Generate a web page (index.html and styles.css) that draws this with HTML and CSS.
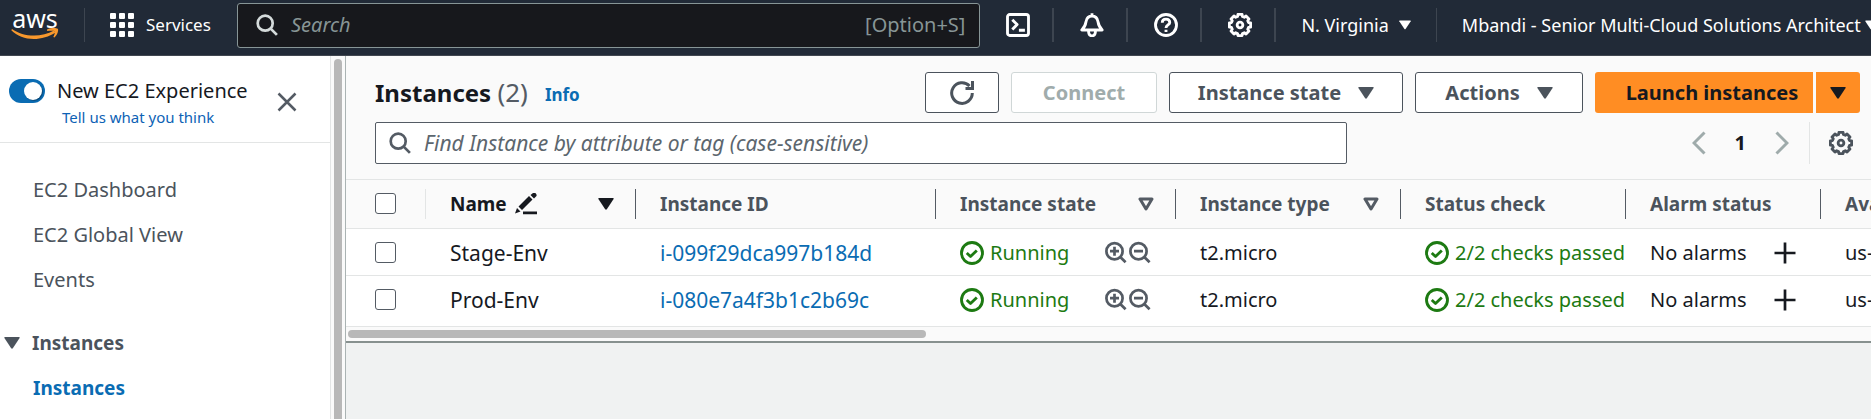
FILE: index.html
```html
<!DOCTYPE html>
<html lang="en">
<head>
<meta charset="utf-8">
<title>Instances | EC2</title>
<link rel="stylesheet" href="styles.css">
</head>
<body>
<svg class="sprite" aria-hidden="true">
  <symbol id="gear" viewBox="0 0 16 16"><path d="M6.63.93h2.74l.26 1.4 1.23.51 1.17-.81 1.94 1.94-.81 1.17.51 1.23 1.4.26v2.74l-1.4.26-.51 1.23.81 1.17-1.94 1.94-1.17-.81-1.23.51-.26 1.4H6.63l-.26-1.4-1.23-.51-1.17.81-1.94-1.94.81-1.17-.51-1.23-1.4-.26V6.63l1.4-.26.51-1.23-.81-1.17 1.94-1.94 1.17.81 1.23-.51z"/><circle cx="8" cy="8" r="1.9"/></symbol>
  <symbol id="search" viewBox="0 0 16 16"><circle cx="6.8" cy="6.8" r="5"/><path d="M10.6 10.6l4 4"/></symbol>
  <symbol id="zoom-in" viewBox="0 0 16 16"><circle cx="7" cy="6.8" r="5.4"/><path d="M11 10.800l3.400 3.400M4 6.800h6M7 3.800v6"/></symbol>
  <symbol id="zoom-out" viewBox="0 0 16 16"><circle cx="7" cy="6.8" r="5.4"/><path d="M11 10.800l3.400 3.400M4 6.800h6"/></symbol>
  <symbol id="ok" viewBox="0 0 16 16"><circle cx="8" cy="8" r="7"/><path d="M4.500 8l2.500 2.300 4.200-4"/></symbol>
  <symbol id="plus" viewBox="0 0 16 16"><path d="M8 1v14M1 8h14"/></symbol>
  <symbol id="caret" viewBox="0 0 16 12"><path d="M1 0h14q1 0 .6 1L9 11q-1 1.400-2 0L.4 1Q0 0 1 0z"/></symbol>
  <symbol id="caret-open" viewBox="0 0 16 14"><path d="M2 2h12L8 12z"/></symbol>
</svg>

<header class="topnav">
  <a class="logo" href="#" aria-label="AWS home">
    <span class="logo-word">aws</span>
    <svg class="logo-smile" viewBox="0 0 48 12"><path d="M1 1c11 8 29 9 42 1.500l1.500 2C31 13.500 11 13.500.3 2.300z"/><path d="M36 1.500C40-.3 45-.3 46.800.8c1 1.700-.5 6-3.300 8.700l-1.200-.5c1.200-2.500 2-5 1.300-5.800-.8-.8-5-.5-7.500-.2z"/></svg>
  </a>
  <button class="services" type="button">
    <svg class="icon solid" viewBox="0 0 24 24"><path d="M1 0h4q1 0 1 1v4q0 1-1 1H1q-1 0-1-1V1q0-1 1-1zm9 0h4q1 0 1 1v4q0 1-1 1h-4q-1 0-1-1V1q0-1 1-1zm9 0h4q1 0 1 1v4q0 1-1 1h-4q-1 0-1-1V1q0-1 1-1zM1 9h4q1 0 1 1v4q0 1-1 1H1q-1 0-1-1v-4q0-1 1-1zm9 0h4q1 0 1 1v4q0 1-1 1h-4q-1 0-1-1v-4q0-1 1-1zm9 0h4q1 0 1 1v4q0 1-1 1h-4q-1 0-1-1v-4q0-1 1-1zM1 18h4q1 0 1 1v4q0 1-1 1H1q-1 0-1-1v-4q0-1 1-1zm9 0h4q1 0 1 1v4q0 1-1 1h-4q-1 0-1-1v-4q0-1 1-1zm9 0h4q1 0 1 1v4q0 1-1 1h-4q-1 0-1-1v-4q0-1 1-1z"/></svg>
    Services
  </button>
  <label class="global-search">
    <svg class="icon"><use href="#search"/></svg>
    <input type="search" placeholder="Search" aria-label="Search">
    <span class="shortcut">[Option+S]</span>
  </label>
  <button class="nav-icon" type="button" aria-label="CloudShell"><svg class="icon bold" viewBox="0 0 16 16"><rect x="1" y="1" width="14" height="14" rx="1.500"/><path d="M4.200 4.500l3.200 3.200-3.200 3.300M8.600 11.500h4"/></svg></button>
  <button class="nav-icon" type="button" aria-label="Notifications"><svg class="icon bold" viewBox="0 0 16 16"><path d="M1.200 11.300h13.600C13 9.500 12.300 8 12 5.800 11.600 3.500 10.300 2 8 2S4.400 3.500 4 5.800C3.700 8 3 9.500 1.200 11.300zM8 2V.2M5.700 12c0 2 1 3.200 2.300 3.200s2.300-1.200 2.300-3.200"/></svg></button>
  <button class="nav-icon" type="button" aria-label="Help"><svg class="icon bold" viewBox="0 0 16 16"><circle cx="8" cy="8" r="7"/><path d="M5.500 6.500C5.500 5 6.500 4.100 8 4.100s2.500.9 2.500 2.200C10.500 8 8 8 8 10M8 11.200v1.500"/></svg></button>
  <button class="nav-icon" type="button" aria-label="Settings"><svg class="icon bold"><use href="#gear"/></svg></button>
  <button class="nav-menu" type="button">N. Virginia <svg class="caret-small"><use href="#caret"/></svg></button>
  <button class="nav-menu last" type="button">Mbandi - Senior Multi-Cloud Solutions Architect <svg class="caret-small"><use href="#caret"/></svg></button>
</header>

<div class="body">
  <aside class="sidebar">
    <div class="experience">
      <input class="toggle" type="checkbox" id="new-exp" checked>
      <div class="exp-text">
        <label for="new-exp">New EC2 Experience</label>
        <a href="#">Tell us what you think</a>
      </div>
      <button class="close" type="button" aria-label="Close navigation"><svg class="icon" viewBox="0 0 24 24"><path d="M3.500 3.500l17 17M20.500 3.500l-17 17"/></svg></button>
    </div>
    <nav class="side-links">
      <a href="#">EC2 Dashboard</a>
      <a href="#">EC2 Global View</a>
      <a href="#">Events</a>
      <button class="section" type="button"><svg class="caret"><use href="#caret"/></svg>Instances</button>
      <a class="current" href="#">Instances</a>
    </nav>
  </aside>
  <div class="side-scroll"><div class="side-thumb"></div></div>

  <main class="main">
    <section class="panel">
      <div class="toolbar">
        <div class="title-row">
          <h1>Instances <span class="count">(2)</span></h1>
          <a class="info" href="#">Info</a>
          <div class="actions">
            <button class="btn refresh" type="button" aria-label="Refresh"><svg class="icon heavy" viewBox="0 0 24 24"><path d="M22.300 12A10.300 10.300 0 1 1 19.500 5M22.500 0v7.500H15.500"/></svg></button>
            <button class="btn connect" type="button" disabled>Connect</button>
            <button class="btn state" type="button">Instance state <svg class="caret"><use href="#caret"/></svg></button>
            <button class="btn act" type="button">Actions <svg class="caret"><use href="#caret"/></svg></button>
            <div class="split">
              <button class="btn launch" type="button">Launch instances</button>
              <button class="btn launch-more" type="button" aria-label="More launch options"><svg class="caret"><use href="#caret"/></svg></button>
            </div>
          </div>
        </div>
        <div class="filter-row">
          <label class="filter">
            <svg class="icon"><use href="#search"/></svg>
            <input type="search" placeholder="Find Instance by attribute or tag (case-sensitive)" aria-label="Find instances">
          </label>
          <div class="pager">
            <button type="button" aria-label="Previous page"><svg class="chevron" viewBox="0 0 14 24"><path d="M12.500 1.500L2 12l10.500 10.500"/></svg></button>
            <button class="page" type="button">1</button>
            <button type="button" aria-label="Next page"><svg class="chevron" viewBox="0 0 14 24"><path d="M1.500 1.500L12 12 1.500 22.500"/></svg></button>
          </div>
          <button class="prefs" type="button" aria-label="Preferences"><svg class="icon bold"><use href="#gear"/></svg></button>
        </div>
      </div>

      <div class="table-wrap">
        <table>
          <colgroup><col class="c-check"><col class="c-name"><col class="c-id"><col class="c-state"><col class="c-type"><col class="c-status"><col class="c-alarm"><col class="c-zone"></colgroup>
          <thead>
            <tr>
              <th class="check"><div class="head light"><input type="checkbox" aria-label="Select all"></div></th>
              <th class="sorted"><div class="head"><span>Name</span><svg class="pencil" viewBox="0 0 22 22"><path d="M0 20.500l2-5.500 3.500 3.500zM3.500 13.500L14 3l3.500 3.500L7 17zM15.500 2L18 0q2-1 3.200 1 1 1.500-.2 2.500L19 5.500zM8 18.500h14v2.700H8z"/></svg><svg class="caret push"><use href="#caret"/></svg></div></th>
              <th><div class="head">Instance ID</div></th>
              <th><div class="head">Instance state<svg class="caret-open push"><use href="#caret-open"/></svg></div></th>
              <th><div class="head">Instance type<svg class="caret-open push"><use href="#caret-open"/></svg></div></th>
              <th><div class="head">Status check</div></th>
              <th><div class="head">Alarm status</div></th>
              <th><div class="head">Availability Zone</div></th>
            </tr>
          </thead>
          <tbody>
            <tr>
              <td class="check"><input type="checkbox" aria-label="Select Stage-Env"></td>
              <td class="wide">Stage-Env</td>
              <td class="wide"><a href="#">i-099f29dca997b184d</a></td>
              <td><div class="cell ok"><svg class="icon bold"><use href="#ok"/></svg>Running<span class="zooms"><svg class="icon"><use href="#zoom-in"/></svg><svg class="icon"><use href="#zoom-out"/></svg></span></div></td>
              <td>t2.micro</td>
              <td class="clip"><div class="cell ok"><svg class="icon bold"><use href="#ok"/></svg>2/2 checks passed</div></td>
              <td><div class="cell">No alarms<button class="add" type="button" aria-label="Add alarm"><svg class="icon"><use href="#plus"/></svg></button></div></td>
              <td>us-east-1a</td>
            </tr>
            <tr>
              <td class="check"><input type="checkbox" aria-label="Select Prod-Env"></td>
              <td class="wide">Prod-Env</td>
              <td class="wide"><a href="#">i-080e7a4f3b1c2b69c</a></td>
              <td><div class="cell ok"><svg class="icon bold"><use href="#ok"/></svg>Running<span class="zooms"><svg class="icon"><use href="#zoom-in"/></svg><svg class="icon"><use href="#zoom-out"/></svg></span></div></td>
              <td>t2.micro</td>
              <td class="clip"><div class="cell ok"><svg class="icon bold"><use href="#ok"/></svg>2/2 checks passed</div></td>
              <td><div class="cell">No alarms<button class="add" type="button" aria-label="Add alarm"><svg class="icon"><use href="#plus"/></svg></button></div></td>
              <td>us-east-1a</td>
            </tr>
          </tbody>
        </table>
      </div>
      <div class="table-scroll"><div class="table-thumb"></div></div>
    </section>
  </main>
</div>
</body>
</html>
```
FILE: styles.css
```css
* { box-sizing: border-box; }
body {
  margin: 0;
  height: 100vh;
  display: flex;
  flex-direction: column;
  overflow: hidden;
  font: 20px/30px "Noto Sans", "Open Sans", sans-serif;
  color: #16191f;
  background: #f0f2f2;
}
a { color: #0a6cb3; text-decoration: none; }
button, input { font: inherit; color: inherit; margin: 0; }
button { display: flex; align-items: center; background: none; border: 0; padding: 0; white-space: nowrap; cursor: pointer; }
input[type="search"] { appearance: none; border: 0; padding: 0; background: none; outline: 0; flex: 1; min-width: 0; }
input::placeholder { font-style: italic; opacity: 1; }

.sprite { position: absolute; width: 0; height: 0; }
.icon { width: 24px; height: 24px; flex: none; fill: none; stroke: currentColor; stroke-width: 1.8; }
.icon.bold { stroke-width: 1.9; stroke-linejoin: round; }
.icon.heavy { stroke-width: 3; }
.icon.solid { fill: currentColor; stroke: none; }
.caret { width: 16px; height: 12px; flex: none; fill: currentColor; }
.caret-small { width: 12px; height: 10px; flex: none; fill: currentColor; }
.caret-open { width: 16px; height: 14px; flex: none; fill: none; stroke: #545b64; stroke-width: 3; stroke-linejoin: round; }
.push { margin-left: auto; }

/* Top navigation */
.topnav { display: flex; align-items: center; flex: none; height: 56px; padding-bottom: 5px; background: #212a37; border-bottom: 1px solid #414750; color: #fff; font-size: 18px; overflow: hidden; }
.logo { display: flex; flex-direction: column; align-items: center; flex: none; width: 85px; height: 34px; padding: 0 14px 0 0; border-right: 1px solid #3d4550; color: #fff; }
.logo-word { font-size: 25px; line-height: 20px; }
.logo-smile { width: 48px; height: 12px; fill: #f7982d; }
.services { flex: none; width: 152px; padding-left: 25px; gap: 12px; font-size: 17px; }
.global-search { display: flex; align-items: center; flex: 0 0 calc(40% - 5px); height: 45px; padding: 0 14px 0 17px; gap: 12px; background: #17181c; border: 1px solid #879596; border-radius: 3px; color: #d5dbdb; font-size: 20px; }
.global-search input::placeholder, .shortcut { color: #879596; }
.nav-icon { justify-content: center; flex: none; width: 74px; height: 34px; padding-left: 3px; border-right: 2px solid #3d4550; }
.nav-menu { flex: none; height: 34px; padding: 0 25px 0 25px; gap: 10px; border-right: 1px solid #3d4550; }
.nav-menu.last { padding-right: 0; gap: 4px; border: 0; }

/* Side navigation */
.body { display: flex; flex: 1; min-height: 0; }
.sidebar { flex: none; width: 331px; background: #fff; border-right: 1px solid #e3e5e5; overflow: hidden; }
.experience { display: flex; height: 87px; padding: 20px 0 0 9px; border-bottom: 1px solid #e3e5e5; }
.toggle { appearance: none; display: flex; width: 36px; height: 24px; margin-top: 3px; border-radius: 12px; background: #0a6cb3; flex: none; }
.toggle::before { content: ""; width: 18px; height: 18px; margin: 3px 3px 3px auto; border-radius: 50%; background: #fff; box-shadow: 1px 1px 1px #0a4a7a; }
.exp-text { display: flex; flex-direction: column; width: 194px; margin-left: 12px; white-space: nowrap; }
.exp-text a { padding-left: 5px; font-size: 15px; line-height: 22px; color: #0d62b5; }
.close { width: 24px; height: 24px; margin: 14px 0 0 24px; color: #545b64; }
.close .icon { stroke-width: 2.500; }
.side-links { display: flex; flex-direction: column; align-items: flex-start; gap: 15px; padding: 32px 0 0 33px; color: #4b535c; }
.side-links a { color: inherit; }
.side-links .section { margin: 18px 0 0 -29px; gap: 12px; height: 30px; font-size: 19px; font-weight: 700; }
.side-links .current { color: #0a6cb3; font-size: 19px; font-weight: 700; }
.side-scroll { flex: none; width: 14px; padding: 3px 3px 0; background: #fafafa; }
.side-thumb { height: 100%; border-radius: 4px 4px 0 0; background: #b8b8b8; width: 8px; }

/* Instances panel */
.main { flex: 1; min-width: 0; border-left: 1px solid #aab3b3; }
.panel { background: #fafafa; border-bottom: 2px solid #87918f; }
.toolbar { padding: 16px 11px 15px 29px; }
.title-row { display: flex; align-items: center; height: 41px; }
h1 { margin: 0; font-size: 24px; line-height: 36px; }
.count { font-size: 26px; line-height: 30px; font-weight: 400; color: #545b64; }
.info { margin: 4px 0 0 17px; font-size: 17px; font-weight: 700; }
.actions { display: flex; gap: 12px; margin-left: auto; }
.btn { justify-content: center; height: 41px; border: 1px solid #4b535c; border-radius: 3px; background: #fff; color: #4b535c; font-weight: 700; }
.refresh { width: 74px; }
.connect { width: 146px; border-color: #d0d7d7; color: #a0acac; }
.state { width: 234px; gap: 17px; }
.act { width: 168px; gap: 17px; }
.split { display: flex; gap: 3px; }
.launch, .launch-more { background: #ff8d23; border: 0; color: #16191f; }
.launch { width: 218px; padding-left: 16px; border-radius: 3px 0 0 3px; }
.launch-more { width: 44px; border-radius: 0 3px 3px 0; }
.filter-row { display: flex; align-items: center; height: 42px; margin-top: 9px; }
.filter { display: flex; align-items: center; flex: 0 1 972px; height: 42px; padding: 0 12px; gap: 12px; border: 1px solid #545b64; border-radius: 2px; background: #fff; color: #545b64; font-size: 21px; }
.filter input::placeholder { color: #5c666e; }
.pager { display: flex; align-items: center; gap: 29px; margin-left: auto; font-weight: 700; color: #9fabab; }
.pager .page { color: #16191f; }
.chevron { width: 14px; height: 24px; fill: none; stroke: currentColor; stroke-width: 3; }
.prefs { height: 42px; margin-left: 20px; padding: 0 7px 0 19px; border-left: 1px solid #e3e5e5; color: #4b535c; }

/* Instances table */
.table-wrap { overflow: hidden; border-top: 1px solid #e3e5e5; border-bottom: 1px solid #e3e5e5; background: #fff; }
table { width: 1725px; min-width: 100%; table-layout: fixed; border-collapse: collapse; }
.c-check { width: 80px; }
.c-name { width: 210px; }
.c-id { width: 300px; }
.c-state { width: 240px; }
.c-type, .c-status { width: 225px; }
.c-alarm { width: 195px; }
th { height: 48px; padding: 0; background: #fafafa; color: #4b535c; font-size: 19px; text-align: left; }
th.sorted { color: #16191f; }
.head { display: flex; align-items: center; height: 30px; padding: 0 21px 0 24px; border-right: 1px solid #545b64; white-space: nowrap; }
.head.light { border-color: #e3e5e5; }
td { height: 47px; padding: 2px 0 0 24px; border-top: 1px solid #e3e5e5; white-space: nowrap; }
td.wide { font-size: 21px; }
tbody tr:last-child td { padding-bottom: 4px; height: 51px; }
td.clip { overflow: hidden; }
th.check .head, td.check { padding-left: 29px; }
th input, td input { appearance: none; display: block; width: 21px; height: 21px; border: 1px solid #545b64; border-radius: 3px; background: #fff; }
.cell { display: flex; align-items: center; gap: 6px; }
.ok { color: #1d7a12; }
.zooms { display: flex; margin: 0 24px 0 auto; color: #545b64; }
.add { margin: 0 24px 0 auto; }
.pencil { width: 22px; height: 22px; margin-left: 8px; fill: currentColor; }
.table-scroll { height: 14px; padding: 3px 2px; }
.table-thumb { width: 38%; height: 8px; border-radius: 4px; background: #b8b8b8; }
```
